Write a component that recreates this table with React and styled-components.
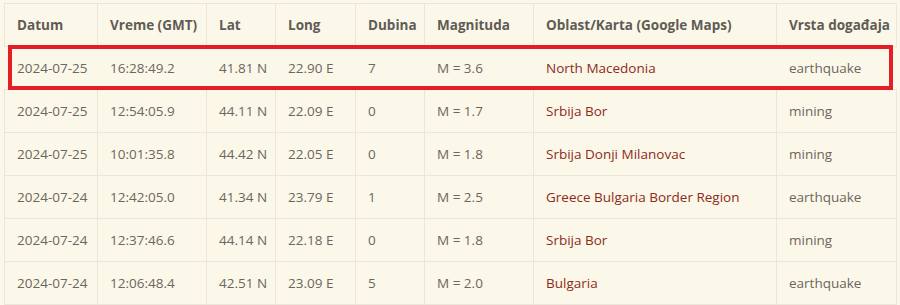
import React from "react"
import styled, { createGlobalStyle } from "styled-components"

const GlobalStyle = createGlobalStyle`
    html, body {
        margin: 0;
        padding: 0;
        background: #fcf8e9;
    }
    body {
        font-family: "Open Sans", "Noto Sans", sans-serif;
    }
`

const columns = [
    { title: "Datum", width: 93 },
    { title: "Vreme (GMT)", width: 109 },
    { title: "Lat", width: 69 },
    { title: "Long", width: 80 },
    { title: "Dubina", width: 69 },
    { title: "Magnituda", width: 109 },
    { title: "Oblast/Karta (Google Maps)", width: 243 },
    { title: "Vrsta događaja", width: 120 },
]

const events = [
    ["2024-07-25", "16:28:49.2", "41.81 N", "22.90 E", "7", "M = 3.6", "North Macedonia", "earthquake"],
    ["2024-07-25", "12:54:05.9", "44.11 N", "22.09 E", "0", "M = 1.7", "Srbija Bor", "mining"],
    ["2024-07-25", "10:01:35.8", "44.42 N", "22.05 E", "0", "M = 1.8", "Srbija Donji Milanovac", "mining"],
    ["2024-07-24", "12:42:05.0", "41.34 N", "23.79 E", "1", "M = 2.5", "Greece Bulgaria Border Region", "earthquake"],
    ["2024-07-24", "12:37:46.6", "44.14 N", "22.18 E", "0", "M = 1.8", "Srbija Bor", "mining"],
    ["2024-07-24", "12:06:48.4", "42.51 N", "23.09 E", "5", "M = 2.0", "Bulgaria", "earthquake"],
]

const App = () => {
    return (
        <Page>
            <GlobalStyle />
            <TableWrap>
                <Table>
                    <colgroup>
                        {columns.map((c) => (
                            <col key={c.title} style={{ width: c.width }} />
                        ))}
                    </colgroup>
                    <thead>
                        <tr>
                            {columns.map((c) => (
                                <Th key={c.title}>{c.title}</Th>
                            ))}
                        </tr>
                    </thead>
                    <tbody>
                        {events.map((row, i) => (
                            <Row key={i} $highlight={i === 0}>
                                {row.map((val, j) => (
                                    <Td key={j} $highlight={i === 0}>
                                        {j === 6 ? <MapLink href="#">{val}</MapLink> : val}
                                    </Td>
                                ))}
                            </Row>
                        ))}
                    </tbody>
                </Table>
                <Highlight />
            </TableWrap>
        </Page>
    )
}

const Page = styled.div`
    width: 900px;
    height: 305px;
    padding: 3px 0 0 4px;
    box-sizing: border-box;
    overflow: hidden;
`

const TableWrap = styled.div`
    position: relative;
    width: 892px;
`

const Table = styled.table`
    width: 892px;
    table-layout: fixed;
    border-collapse: collapse;
    font-size: 13.5px;
    color: #6b6660;
`

const Th = styled.th`
    height: 42px;
    padding: 0 12px;
    text-align: left;
    font-weight: 700;
    color: #5f5b56;
    border: 1px solid #ebe6d8;
    white-space: nowrap;
`

const Row = styled.tr`
    height: 43px;
`

const Td = styled.td`
    padding: 0 12px;
    border: 1px solid #ebe6d8;
    border-left-color: ${(p) => (p.$highlight ? "transparent" : "#ebe6d8")};
    border-right-color: ${(p) => (p.$highlight ? "transparent" : "#ebe6d8")};
    white-space: nowrap;
`

const MapLink = styled.a`
    color: #8c2a20;
    text-decoration: none;
`

const Highlight = styled.div`
    position: absolute;
    left: 4px;
    top: 42px;
    width: 885px;
    height: 45px;
    border: 4px solid #e31e26;
    box-sizing: border-box;
    pointer-events: none;
`

export default App
